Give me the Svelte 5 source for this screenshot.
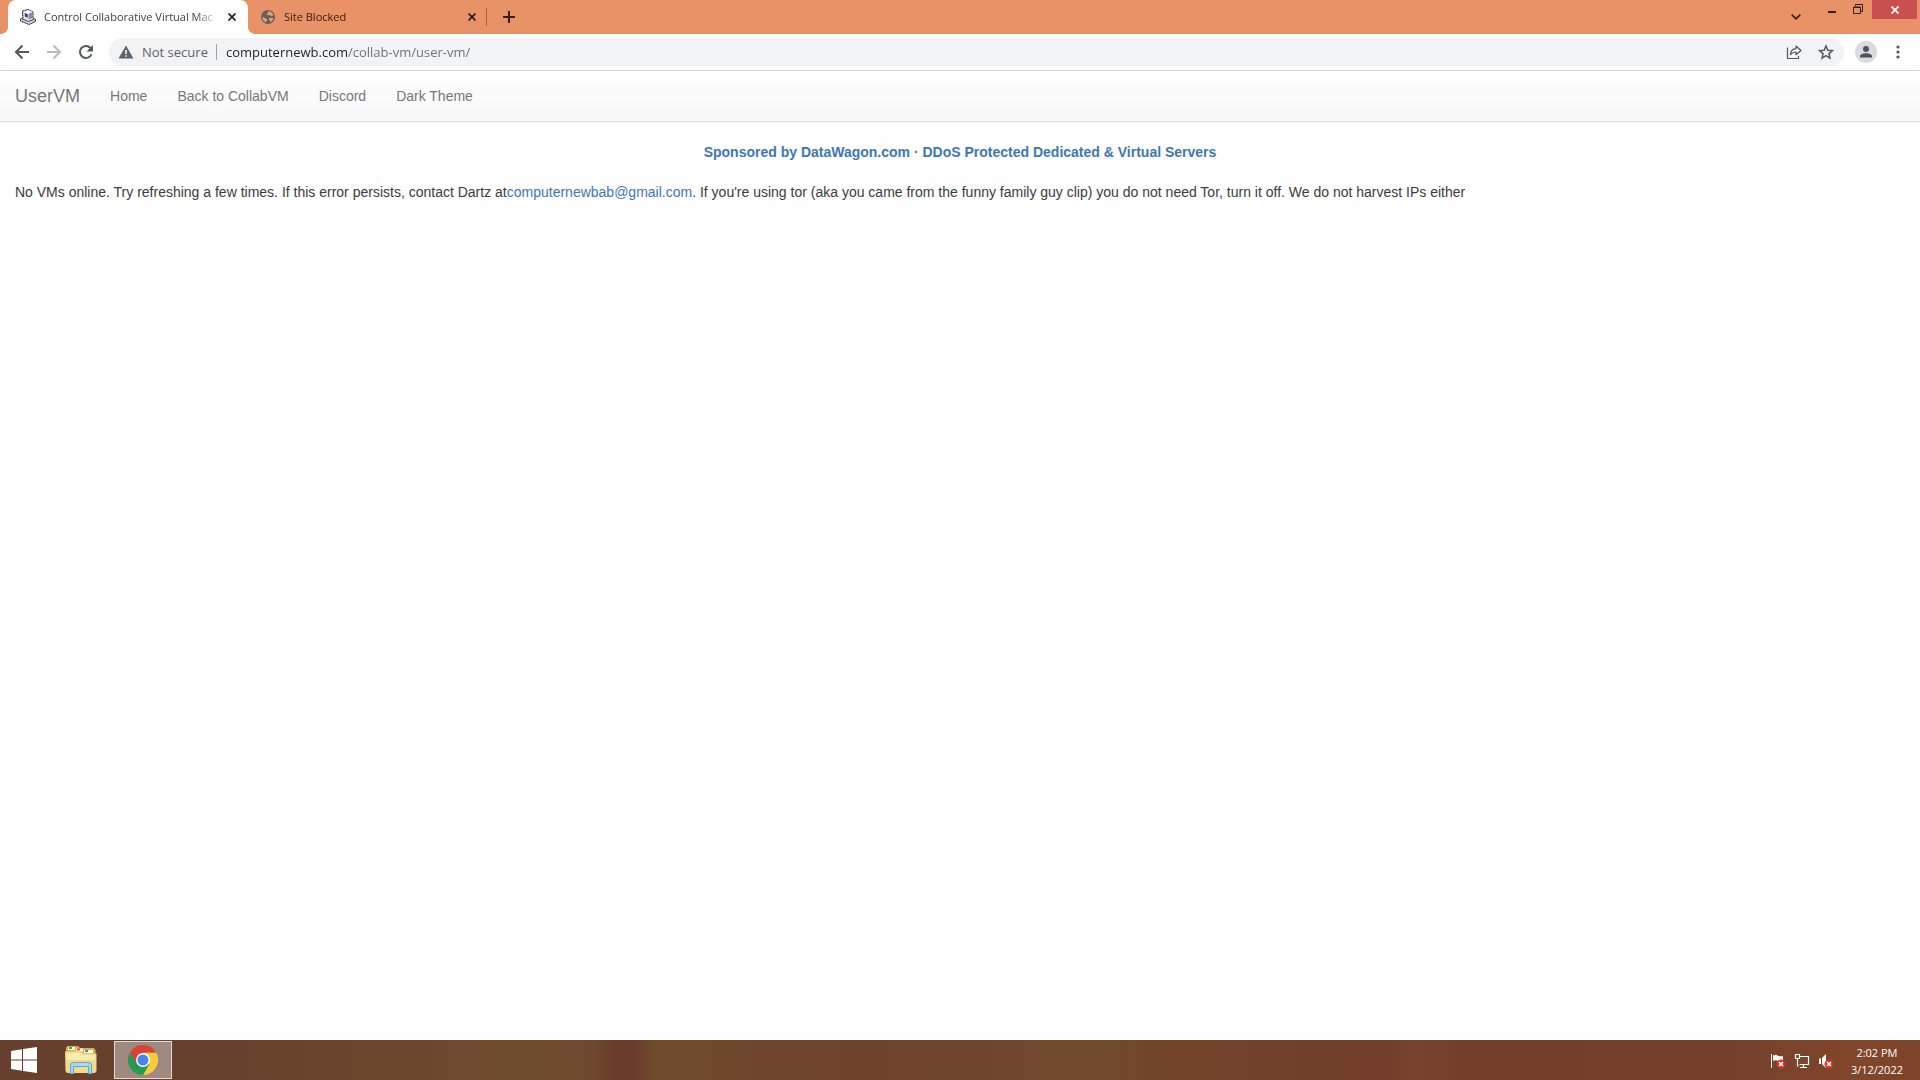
<script lang="ts">
	interface Tab {
		id: number;
		title: string;
		icon: 'computer' | 'globe';
	}

	let tabs = $state<Tab[]>([
		{ id: 1, title: 'Control Collaborative Virtual Mac', icon: 'computer' },
		{ id: 2, title: 'Site Blocked', icon: 'globe' }
	]);
	let active = $state(1);
	let url = $state('computernewb.com/collab-vm/user-vm/');

	const links = ['Home', 'Back to CollabVM', 'Discord', 'Dark Theme'];

	function closeTab(id: number) {
		tabs = tabs.filter((t) => t.id !== id);
	}
</script>

<div class="desktop">
	<header class="titlebar">
		<div class="tabs">
			{#each tabs as tab (tab.id)}
				<div class="tab" class:active={tab.id === active}>
					<button class="tab-main" onclick={() => (active = tab.id)}>
						{#if tab.icon === 'computer'}
							<svg viewBox="0 0 16 16" width="16" height="16">
								<path d="M2.500 2 8 .5l5 2.500v6l2.500 1.500v2L9 15.500.5 12v-2L3 9z" fill="#dcdde2" stroke="#14151c" stroke-dasharray="2 .5" />
								<path d="m3.500 2.800 5 1.700v6l-4.500-2z" fill="#eef0f6" />
								<path d="m4.500 4 3.200 1.200v3.600L5 7.700z" fill="#1c3a9e" />
								<path d="m8.500 4.500 4-1.500v6l-4 1.500z" fill="#8d8f9b" />
								<path d="m3.500 2.800 4.500-1.500L12.500 3l-4 1.500z" fill="#fafafa" />
								<path d="m2 10 6.500 2.500 5.500-2" fill="none" stroke="#3a3b45" />
							</svg>
						{:else}
							<svg viewBox="0 0 16 16" width="16" height="16">
								<circle cx="8" cy="8" r="7" fill="#6a5b54" />
								<path d="M2.300 8.200c1.500 0 2 .2 3.200 1.200 1 .8 2 .3 2 1.300s-1.500 1-1.500 2.600c-2.300-.7-3.700-2.700-3.700-5.100M8 2.300c2.700 0 5 1.800 5.600 4.300-1.200-.3-1.600.8-2.700.6-.8-.2-.4-1.300-1.600-1.400-.8 0-1 .8-2 .5-1-.4-.7-1.500.2-1.700.9-.2.2-1.300.5-2.300M9 9c1.500-.8 3 .5 4.600.3-.5 2-2 3.600-4.100 4.200.9-1.500 1.300-2-.5-3z" fill="#e0a27e" />
							</svg>
						{/if}
						<span class="tab-title">{tab.title}</span>
					</button>
					<button class="tab-close" aria-label="Close tab" onclick={() => closeTab(tab.id)}>
						<svg viewBox="0 0 8 8" width="8" height="8" stroke="currentColor" stroke-width="1.700"><path d="m.5.5 7 7m0-7-7 7" /></svg>
					</button>
				</div>
			{/each}
			<button class="new-tab" aria-label="New tab">
				<svg viewBox="0 0 12 12" width="12" height="12" stroke="currentColor" stroke-width="2"><path d="M6 0v12M0 6h12" /></svg>
			</button>
		</div>
		<div class="window-controls">
			<button class="tab-search" aria-label="Search tabs">
				<svg viewBox="0 0 10 6" width="10" height="6" fill="none" stroke="currentColor" stroke-width="1.800"><path d="m.7.7 4.300 4.100L9.300.7" /></svg>
			</button>
			<button class="window-btn" aria-label="Minimize">
				<svg viewBox="0 0 10 10" width="10" height="10"><path d="M1 7h8v2H1z" fill="currentColor" /></svg>
			</button>
			<button class="window-btn" aria-label="Restore">
				<svg viewBox="0 0 10 10" width="10" height="10" fill="none" stroke="currentColor"><path d="M2.500 2V.5h7v7H8" /><path d="M.5 3h7v6.500h-7zM0 3.500h8" /></svg>
			</button>
			<button class="window-close" aria-label="Close">
				<svg viewBox="0 0 8 8" width="8" height="8" stroke="currentColor" stroke-width="1.700"><path d="m.5.5 7 7m0-7-7 7" /></svg>
			</button>
		</div>
	</header>

	<div class="toolbar">
		<button class="tool" aria-label="Back">
			<svg viewBox="0 0 16 16" width="16" height="16" fill="none" stroke="currentColor" stroke-width="2"><path d="M15 8H2.500M8.500 1.500 2 8l6.500 6.500" /></svg>
		</button>
		<button class="tool" aria-label="Forward" disabled>
			<svg viewBox="0 0 16 16" width="16" height="16" fill="none" stroke="currentColor" stroke-width="2"><path d="M1 8h12.500M7.500 1.500 14 8l-6.500 6.500" /></svg>
		</button>
		<button class="tool" aria-label="Reload">
			<svg viewBox="0 0 16 16" width="16" height="16"><path d="M13.500 10.300A6 6 0 1 1 12.300 3.800L14 5.500" fill="none" stroke="currentColor" stroke-width="2" /><path d="M15 1v6.500H8.500z" fill="currentColor" /></svg>
		</button>
		<div class="omnibox">
			<button class="security">
				<svg viewBox="0 0 16 14" width="16" height="14"><path d="M8 .5 15.500 13.500H.5z" fill="currentColor" /><path d="M7.200 5h1.600v4H7.200zM7.200 10.200h1.600v1.600H7.200z" fill="#f1f3f4" /></svg>
				<span>Not secure</span>
			</button>
			<input class="url" type="text" aria-label="Address" spellcheck="false" bind:value={url} />
			<button class="tool" aria-label="Share">
				<svg viewBox="0 0 16 16" width="16" height="16" fill="none" stroke="currentColor" stroke-width="1.200" stroke-linejoin="round"><path d="M1.500 3.500v11h11V12" /><path d="M4.500 10.500c.2-3.800 2-5.600 5.500-5.800V2l5 4.500-5 4.200V8c-2.500 0-4 .7-5.500 2.500z" /></svg>
			</button>
			<button class="tool" aria-label="Bookmark this page">
				<svg viewBox="0 0 16 16" width="16" height="16" fill="none" stroke="currentColor" stroke-width="1.500"><path d="m8 2 1.800 4.200 4.700.4-3.500 3 1 4.500L8 11.700l-4 2.400 1-4.500-3.500-3 4.700-.4z" /></svg>
			</button>
		</div>
		<button class="tool profile" aria-label="Profile">
			<svg viewBox="0 0 22 22" width="22" height="22"><circle cx="11" cy="11" r="11" fill="#dadce0" /><circle cx="11" cy="8" r="3" fill="#4d5160" /><path d="M5 16.500v-1c0-2 3-3.200 6-3.200s6 1.200 6 3.200v1z" fill="#4d5160" /></svg>
		</button>
		<button class="tool" aria-label="Menu">
			<svg viewBox="0 0 4 14" width="4" height="14" fill="currentColor"><circle cx="2" cy="2" r="1.600" /><circle cx="2" cy="7" r="1.600" /><circle cx="2" cy="12" r="1.600" /></svg>
		</button>
	</div>

	<nav class="navbar">
		<a class="brand" href="#home">UserVM</a>
		{#each links as link}
			<a href="#{link.toLowerCase().replaceAll(' ', '-')}">{link}</a>
		{/each}
	</nav>

	<main>
		<p class="sponsor"><a href="#sponsor">Sponsored by DataWagon.com · DDoS Protected Dedicated &amp; Virtual Servers</a></p>
		<p>No VMs online. Try refreshing a few times. If this error persists, contact Dartz at<a href="mailto:computernewbab@gmail.com">computernewbab@gmail.com</a>. If you're using tor (aka you came from the funny family guy clip) you do not need Tor, turn it off. We do not harvest IPs either</p>
	</main>

	<footer class="taskbar">
		<button class="task start" aria-label="Start">
			<svg viewBox="0 0 26 26" width="26" height="26" fill="#fff"><path d="M0 4 11 2.300V12.500H0zM12 2.100 26 0v12.500H12zM0 13.500h11v10.200L0 22zM12 13.500h14V26l-14-2.100z" /></svg>
		</button>
		<button class="task" aria-label="File Explorer">
			<svg viewBox="0 0 32 30" width="32" height="30">
				<path d="M1 2.500 2.500 1H13l2 2h14l1.500 2v20H1z" fill="#d5b052" />
				<path d="M3 2h7v3H3z" fill="#f5f7ef" /><path d="M4 2h3v2H4z" fill="#36a852" />
				<path d="M11 3.500h7v3h-7z" fill="#f5f7ef" /><path d="M12 3.500h3v2h-3z" fill="#d04b32" />
				<path d="M19 5h9v3h-9z" fill="#f5f7ef" /><path d="M20 5h3v2h-3z" fill="#4389c9" />
				<path d="M0 6.500h16l2 2h13.500V26L30 28H2l-1.500-2z" fill="#eedc8c" />
				<path d="M2 8h13l2 2h13v5H2z" fill="#f7edb2" />
				<path d="M5 29V19l3-2h16l3 2v10h-4v-7H9v7z" fill="#64a9d6" />
				<path d="M6 28v-8.500l2.500-1.500h15l2.500 1.500V28h-2v-7H8v7z" fill="#a9d9f0" />
			</svg>
		</button>
		<button class="task running" aria-label="Google Chrome">
			<svg viewBox="0 0 30 30" width="30" height="30">
				<path d="M15 7.500h13A15 15 0 0 1 15 30l6.500-11.200z" fill="#f8ca3c" />
				<path d="M2 7.500A15 15 0 0 0 15 30l6.500-11.200L15 15H6.400z" fill="#279a52" />
				<path d="M15 7.500h13A15 15 0 0 0 2 7.500l6.500 11.300z" fill="#d94335" />
				<circle cx="15" cy="15" r="7" fill="#fff" />
				<circle cx="15" cy="15" r="5.500" fill="#4684ee" />
			</svg>
		</button>
		<div class="tray">
			<button aria-label="Action Center">
				<svg viewBox="0 0 16 16" width="16" height="16"><path d="M1 1h1v14H1zM3 2.500c2-1 3.500-.8 4.500 0s2.500 1 5.500.8v5c-3 .5-4.500.2-5.500-.6S5 7 3 7.800z" fill="#fff" /><circle cx="11" cy="11" r="4.500" fill="#d8342f" /><path d="m9 9 4 4m0-4-4 4" stroke="#fff" stroke-width="1.500" /></svg>
			</button>
			<button aria-label="Network">
				<svg viewBox="0 0 16 16" width="16" height="16" fill="none" stroke="#fff" stroke-width="1.200"><path d="M6 3.500h8.500v8h-9M9.500 12v2.500M6 14.500h7M1.500 1.500h4v4h-4zM3.500 6v7h1" /></svg>
			</button>
			<button aria-label="Volume muted">
				<svg viewBox="0 0 16 16" width="16" height="16"><path d="M1 5.500h2V11H1zM4 5l4-4v14l-4-4z" fill="#fff" /><circle cx="11" cy="11" r="4.500" fill="#d8342f" /><path d="m9 9 4 4m0-4-4 4" stroke="#fff" stroke-width="1.500" /></svg>
			</button>
		</div>
		<button class="clock"><span>2:02 PM</span><span>3/12/2022</span></button>
	</footer>
</div>

<style>
	:global(body) {
		margin: 0;
	}

	.desktop {
		display: flex;
		flex-direction: column;
		min-height: 100vh;
		background: #fefefe;
		font-family: 'Open Sans', 'Noto Sans', sans-serif;
	}

	button {
		display: flex;
		align-items: center;
		justify-content: center;
		flex-shrink: 0;
		padding: 0;
		border: none;
		background: none;
		color: inherit;
		font: inherit;
	}

	svg {
		flex-shrink: 0;
	}

	.titlebar {
		display: flex;
		justify-content: space-between;
		height: 34px;
		padding-left: 8px;
		background: #e99167;
		color: #38200f;
	}

	.tabs {
		display: flex;
		align-items: center;
	}

	.tab {
		position: relative;
		display: flex;
		align-items: center;
		box-sizing: border-box;
		width: 240px;
		height: 34px;
		padding: 0 8px 0 12px;
	}
	.tab.active {
		background: #fff;
		border-radius: 8px 8px 0 0;
		color: #3c4043;
	}
	.tab.active::before,
	.tab.active::after {
		content: '';
		position: absolute;
		bottom: 0;
		width: 8px;
		height: 8px;
	}
	.tab.active::before {
		right: 100%;
		background: radial-gradient(circle at 0 0, transparent 8px, #fff 8px);
	}
	.tab.active::after {
		left: 100%;
		background: radial-gradient(circle at 100% 0, transparent 8px, #fff 8px);
	}
	.tab:not(.active)::after {
		content: '';
		position: absolute;
		right: 1px;
		top: 8px;
		width: 1px;
		height: 18px;
		background: #a8603c;
	}

	.tab-main {
		flex: 1;
		justify-content: flex-start;
		gap: 8px;
		min-width: 0;
		height: 32px;
	}

	.tab-title {
		flex: 1;
		min-width: 0;
		font-size: 11px;
		line-height: 16px;
		text-align: left;
		white-space: nowrap;
		overflow: hidden;
		mask-image: linear-gradient(to right, #000 calc(100% - 24px), transparent);
	}

	.tab-close {
		width: 16px;
		height: 16px;
		margin-left: 4px;
		color: #2b211c;
	}

	.new-tab {
		width: 28px;
		height: 28px;
		margin-left: 7px;
	}

	.window-controls {
		display: flex;
		align-items: flex-start;
	}

	.tab-search {
		width: 28px;
		height: 34px;
		margin-right: 9px;
	}

	.window-btn {
		width: 26px;
		height: 18px;
	}

	.window-close {
		width: 45px;
		height: 19px;
		margin-right: 3px;
		margin-left: 1px;
		background: #c9504f;
		color: #fff;
	}

	.toolbar {
		display: flex;
		align-items: center;
		height: 36px;
		padding: 0 6px;
		background: #fff;
		border-bottom: 1px solid #d8d8d8;
		color: #55585c;
	}

	.tool {
		width: 32px;
		height: 28px;
	}
	.tool:disabled {
		color: #b9bbbe;
	}

	.omnibox {
		display: flex;
		align-items: center;
		flex: 1;
		min-width: 0;
		height: 28px;
		margin: 0 6px 0 7px;
		padding-right: 2px;
		border-radius: 14px;
		background: #f1f3f4;
	}

	.security {
		gap: 8px;
		padding: 0 8px 0 9px;
		border-right: 1px solid #9da0a4;
		font-size: 13px;
		line-height: 16px;
		color: #5f6368;
	}

	/* host part is drawn darker than the path */
	.url {
		flex: 1;
		min-width: 0;
		padding: 0 0 0 9px;
		border: none;
		outline: none;
		background: linear-gradient(to right, #202124 130px, #6b6f73 130px);
		background-clip: text;
		-webkit-text-fill-color: transparent;
		color: #5f6368;
		caret-color: #202124;
		font: 13px/20px 'Open Sans', 'Noto Sans', sans-serif;
	}

	.navbar {
		display: flex;
		align-items: center;
		height: 50px;
		background: linear-gradient(#fff, #f8f8f8);
		border-bottom: 1px solid #e2e2e2;
		box-shadow: 0 1px 4px rgba(0, 0, 0, 0.06);
		font: 14px/20px 'Liberation Sans', Arial, sans-serif;
	}
	.navbar a {
		padding: 15px;
		color: #777;
		text-decoration: none;
	}
	.navbar .brand {
		font-size: 18px;
	}

	main {
		flex: 1;
		padding: 20px 15px;
		font: 14px/20px 'Liberation Sans', Arial, sans-serif;
		color: #3c3c3c;
	}
	main p {
		margin: 0 0 20px;
	}
	main a {
		color: #3f78ae;
		text-decoration: none;
	}

	.sponsor {
		font-weight: bold;
		text-align: center;
	}

	.taskbar {
		display: flex;
		align-items: center;
		height: 40px;
		background: linear-gradient(to right, #673f2d 0%, #68412c 12%, #6f4b2d 28%, #6e472c 31%, #6a3b2a 32%, #6b3b2a 33%, #6f4a2d 34%, #6f432a 45%, #70492d 57%, #73442a 61%, #703e2a 72%, #78432e 74%, #733f2b 76%, #74402c 90%, #82462a 97%, #7a4229 100%);
		color: #fff;
	}

	.task {
		width: 58px;
		height: 38px;
		margin-right: 4px;
	}
	.task.start {
		width: 48px;
	}
	.running {
		box-sizing: border-box;
		border: 1px solid #e5dcd7;
		background: #9f8a80;
	}

	.tray {
		display: flex;
		gap: 8px;
		margin-left: auto;
		padding-top: 2px;
	}

	.clock {
		flex-direction: column;
		margin: 0 17px;
		padding-top: 1px;
		font-size: 11px;
		line-height: 17px;
	}
</style>
